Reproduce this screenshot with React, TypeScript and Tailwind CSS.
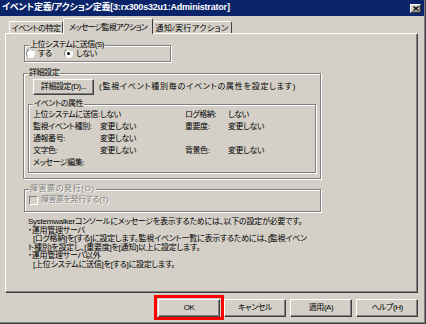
import type { ReactNode } from "react"

const raised =
  "bg-[#d4d0c8] border border-t-white border-l-white border-r-[#404040] border-b-[#404040] shadow-[inset_-1px_-1px_0_#808080]"

function GroupBox({
  label,
  disabled,
  className,
  labelClass,
  children,
}: {
  label: string
  disabled?: boolean
  className?: string
  labelClass?: string
  children?: ReactNode
}) {
  return (
    <div className={`relative border border-[#808080] shadow-[inset_1px_1px_0_#ffffff,1px_1px_0_#ffffff] ${className ?? ""}`}>
      <span
        className={`absolute left-[4px] -top-[7px] bg-[#d4d0c8] px-[1px] leading-[11px] ${
          disabled ? "text-[#808080] [text-shadow:1px_1px_0_#ffffff]" : ""
        } ${labelClass ?? ""}`}
      >
        {label}
      </span>
      {children}
    </div>
  )
}

function Radio({ checked }: { checked?: boolean }) {
  return (
    <span className="flex items-center justify-center w-[9px] h-[9px] rounded-full bg-white border border-t-[#808080] border-l-[#808080] border-r-white border-b-white shrink-0">
      {checked && <span className="w-[3px] h-[3px] rounded-full bg-black" />}
    </span>
  )
}

function Button({ children, className }: { children: ReactNode; className?: string }) {
  return (
    <div className={`${raised} flex items-center justify-center leading-none shrink-0 ${className ?? ""}`}>{children}</div>
  )
}

const attrRows = [
  ["上位システムに送信:", "しない", "ログ格納:", "しない"],
  ["監視イベント種別:", "変更しない", "重要度:", "変更しない"],
  ["通報番号:", "変更しない", "", ""],
  ["文字色:", "変更しない", "背景色:", "変更しない"],
  ["メッセージ編集:", "", "", ""],
]

const notes = [
  { text: "Systemwalkerコンソールにメッセージを表示するためには、以下の設定が必要です。", indent: false },
  { text: "・運用管理サーバ", indent: false },
  { text: "[ログ格納]を[する]に設定します。監視イベント一覧に表示するためには、[監視イベン", indent: true },
  { text: "ト種別]を設定し、[重要度]を[通知]以上に設定します。", indent: false },
  { text: "・運用管理サーバ以外", indent: false },
  { text: "[上位システムに送信]を[する]に設定します。", indent: true },
]

export default function App() {
  return (
    <div className="w-[426px] h-[324px] bg-[#d4d0c8] border-r border-b border-[#404040] text-black text-[8px] tracking-[-0.45px] whitespace-nowrap font-['Liberation_Sans','Noto_Sans_CJK_JP',sans-serif] [font-feature-settings:'palt']">
      <div className="h-full flex flex-col border-r border-b border-[#808080]">
        {/* title bar */}
        <div className="h-[16px] bg-[#0a246a] flex items-center justify-between pl-[2px] pr-[3px]">
          <span className="text-white font-bold text-[9px] tracking-[-0.2px]">
            イベント定義/アクション定義[3:rx300s32u1:Administrator]
          </span>
          <span className={`${raised} w-[11px] h-[9px] flex items-center justify-center`}>
            <svg width="6" height="5" viewBox="0 0 6 5">
              <path d="M0.5 0.5 L5.5 4.5 M5.5 0.5 L0.5 4.5" stroke="#000" strokeWidth="1.3" />
            </svg>
          </span>
        </div>

        {/* tabs */}
        <div className="ml-[5px] mt-[2px]">
          <div className="h-[15px] flex items-end pl-[4px]">
            <div className="w-[54px] h-[12px] flex items-center justify-center pt-[2px] border-t border-l border-r border-t-white border-l-white border-r-[#404040] rounded-t-[2px]">
              イベントの特定
            </div>
            <div className="relative z-10 -mb-[1px] w-[90px] h-[16px] bg-[#d4d0c8] flex items-center justify-center pt-[2px] tracking-[-0.75px] border-t border-l border-r border-t-white border-l-white border-r-[#404040] rounded-t-[2px]">
              メッセージ監視アクション
            </div>
            <div className="w-[79px] h-[12px] flex items-center justify-center pt-[2px] tracking-[0.4px] border-t border-r border-t-white border-r-[#404040] rounded-t-[2px]">
              通知/実行アクション
            </div>
          </div>

          {/* panel */}
          <div className="w-[413px] h-[260px] border border-t-white border-l-white border-r-[#404040] border-b-[#404040] shadow-[inset_-1px_-1px_0_#808080] flex flex-col">
            <GroupBox label="上位システムに送信(S)" className="ml-[18px] mt-[11px] w-[147px] h-[17px]">
              <div className="flex items-center pt-[3px] pl-[1px] leading-[9px]">
                <Radio />
                <span className="ml-[3px] w-[26px]">する</span>
                <Radio checked />
                <span className="ml-[3px]">しない</span>
              </div>
            </GroupBox>

            <GroupBox label="詳細設定" className="ml-[17px] mt-[11px] w-[298px] h-[106px]">
              <div className="flex items-center ml-[9px] mt-[5px]">
                <Button className="w-[61px] h-[16px]">詳細設定(D)...</Button>
                <span className="ml-[5px] tracking-[0.75px]">(監視イベント種別毎のイベントの属性を設定します)</span>
              </div>
              <GroupBox label="イベントの属性" className="ml-[4px] mt-[9px] w-[288px] h-[69px]">
                <div className="grid grid-cols-[67px_85px_43px_1fr] auto-rows-[12px] items-center pt-[4px] pl-[4px] leading-[12px]">
                  {attrRows.map((r) =>
                    r.map((c, j) => <span key={r[0] + j}>{c}</span>)
                  )}
                </div>
              </GroupBox>
            </GroupBox>

            <GroupBox
              label="障害票の発行(O)"
              disabled
              labelClass="tracking-[0.6px] left-[3px]"
              className="ml-[18px] mt-[10px] w-[297px] h-[23px]"
            >
              <div className="flex items-center pt-[5px] pl-[4px] leading-[10px]">
                <span className="w-[9px] h-[9px] bg-[#d4d0c8] border border-t-[#808080] border-l-[#808080] border-r-white border-b-white" />
                <span className="ml-[3px] text-[#808080] [text-shadow:1px_1px_0_#ffffff]">障害票を発行する(T)</span>
              </div>
            </GroupBox>

            <div className="ml-[22px] mt-[6px] leading-[8.6px] tracking-[-0.25px] flex flex-col items-start">
              {notes.map((n) => (
                <span key={n.text} className={n.indent ? "pl-[5px]" : ""}>
                  {n.text}
                </span>
              ))}
            </div>
          </div>
        </div>

        {/* buttons */}
        <div className="mt-[6px] flex justify-end gap-[4px] pr-[6px]">
          <div className="relative">
            <Button className="w-[62px] h-[18px]">OK</Button>
            <div className="absolute -left-[4px] -right-[4px] -top-[4px] -bottom-[3px] border-[3px] border-[#ff0000]" />
          </div>
          <Button className="w-[62px] h-[18px]">キャンセル</Button>
          <Button className="w-[62px] h-[18px]">適用(A)</Button>
          <Button className="w-[62px] h-[18px]">ヘルプ(H)</Button>
        </div>
      </div>
    </div>
  )
}
